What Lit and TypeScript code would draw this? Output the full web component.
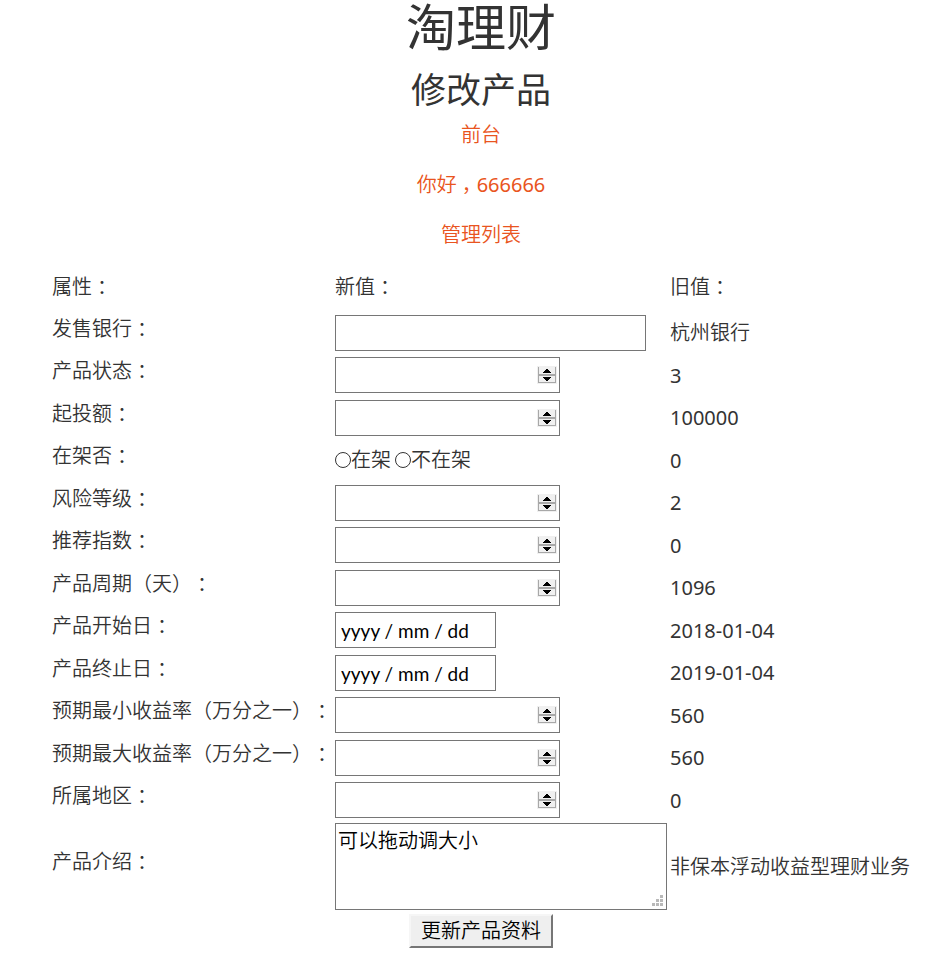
import { LitElement, html, css, nothing } from "lit";
import { customElement } from "lit/decorators.js";

type Kind = "text" | "number" | "radio" | "date" | "area";

interface Field {
  id: string;
  label: string;
  kind: Kind;
  old: string;
}

const FIELDS: Field[] = [
  { id: "bank", label: "发售银行：", kind: "text", old: "杭州银行" },
  { id: "state", label: "产品状态：", kind: "number", old: "3" },
  { id: "minimum", label: "起投额：", kind: "number", old: "100000" },
  { id: "onsale", label: "在架否：", kind: "radio", old: "0" },
  { id: "risk", label: "风险等级：", kind: "number", old: "2" },
  { id: "index", label: "推荐指数：", kind: "number", old: "0" },
  { id: "period", label: "产品周期（天）：", kind: "number", old: "1096" },
  { id: "start", label: "产品开始日：", kind: "date", old: "2018-01-04" },
  { id: "end", label: "产品终止日：", kind: "date", old: "2019-01-04" },
  { id: "minrate", label: "预期最小收益率（万分之一）：", kind: "number", old: "560" },
  { id: "maxrate", label: "预期最大收益率（万分之一）：", kind: "number", old: "560" },
  { id: "region", label: "所属地区：", kind: "number", old: "0" },
  { id: "intro", label: "产品介绍：", kind: "area", old: "非保本浮动收益型理财业务" },
];

/* Full-width colons and commas are set centred in their cell. */
const centred = (text: string) =>
  text
    .split(/([：，])/)
    .map((part) => (part === "：" || part === "，" ? html`<span class="mark">${part}</span>` : part || nothing));

@customElement("app-root")
export class AppRoot extends LitElement {
  static styles = css`
    :host {
      display: block;
      box-sizing: border-box;
      padding: 0 23px 8px 50px;
      background: #fff;
      color: #333;
      font: 350 20px/28px "Noto Sans", "Noto Sans CJK SC", sans-serif;
      text-spacing-trim: space-all;
    }
    .mark {
      display: inline-block;
      box-sizing: border-box;
      width: 20px;
      text-indent: 5px;
    }
    .title,
    .subtitle {
      margin: 0;
      font-weight: 400;
      text-align: center;
    }
    .title {
      font-size: 50px;
      line-height: 54px;
    }
    .subtitle {
      margin-top: 16px;
      font-size: 35px;
      line-height: 40px;
    }
    .links {
      display: flex;
      flex-direction: column;
      align-items: center;
      line-height: 50px;
    }
    .links a {
      color: #e95420;
      text-decoration: none;
    }
    .digits {
      font-weight: 400;
    }
    .sheet {
      width: 100%;
      border-spacing: 2px;
      border-collapse: separate;
    }
    .c-name {
      width: 281px;
    }
    .c-new {
      width: 333px;
    }
    th,
    td {
      padding: 0;
      font-weight: inherit;
      text-align: left;
      vertical-align: middle;
      white-space: nowrap;
    }
    td.old {
      font-weight: 400;
    }
    td.old.cjk {
      font-weight: 350;
    }
    .head th {
      height: 49px;
    }
    .row {
      height: 40px;
    }
    .row:nth-child(even) {
      height: 41px;
    }
    .row th {
      padding-bottom: 9px;
      line-height: 24px;
    }
    td.new {
      vertical-align: top;
      padding-top: 2px;
    }
    td.new.area-cell {
      padding-top: 0;
    }
    .field {
      display: block;
      box-sizing: border-box;
      height: 36px;
      margin: 0;
      padding: 2px;
      border: 1px solid #767676;
      border-radius: 0;
      background: #fff;
      color: #000;
      font: inherit;
    }
    .text {
      width: 311px;
    }
    .number {
      width: 225px;
    }
    .number::-webkit-inner-spin-button {
      -webkit-appearance: none;
      width: 20px;
      height: 30px;
      opacity: 1;
      background: url("data:image/svg+xml,%3Csvg xmlns='http://www.w3.org/2000/svg' width='20' height='18' shape-rendering='crispEdges'%3E%3Cpath fill='%23f0f0f0' d='M0 0h20v18H0z'/%3E%3Cpath fill='%23a8a8a8' d='M1 1h1v16H1zM18 1h1v16h-1zM1 8h18v2H1zM1 16h18v1H1z'/%3E%3Cpath d='M9 3h2v1H9zM8 4h4v1H8zM7 5h6v1H7zM6 6h8v1H6zM6 11h8v1H6zM7 12h6v1H7zM8 13h4v1H8zM9 14h2v1H9z'/%3E%3C/svg%3E")
        center no-repeat;
    }
    .date {
      width: 161px;
      padding-left: 5px;
      font-family: Lato, "Noto Sans", sans-serif;
      font-size: 19px;
      font-weight: 400;
    }
    .date::placeholder {
      color: #000;
      opacity: 1;
    }
    .area {
      width: 332px;
      height: 87px;
      resize: both;
      line-height: 30px;
    }
    .area::-webkit-resizer {
      background: url("data:image/svg+xml,%3Csvg xmlns='http://www.w3.org/2000/svg' width='15' height='15' shape-rendering='crispEdges'%3E%3Cpath fill='%23b9b9b9' d='M9 1h3v3H9zM5 5h3v3H5zM9 5h3v3H9zM1 9h3v3H1zM5 9h3v3H5zM9 9h3v3H9z'/%3E%3C/svg%3E")
        no-repeat;
    }
    .choices {
      display: flex;
      gap: 4px;
      height: 36px;
      margin: 0;
      padding: 0;
      border: 0;
    }
    .choice {
      display: flex;
      align-items: center;
    }
    .radio {
      appearance: none;
      box-sizing: border-box;
      width: 16px;
      height: 16px;
      margin: 0;
      border: 1px solid #333;
      border-radius: 50%;
      background: #fff;
    }
    .radio:checked {
      box-shadow: inset 0 0 0 3px #fff;
      background: #333;
    }
    .actions {
      display: flex;
      justify-content: center;
      padding-top: 2px;
    }
    .submit {
      box-sizing: border-box;
      height: 34px;
      padding: 0 10px;
      border: 2px solid;
      border-color: #f6f6f6 #767676 #767676 #f6f6f6;
      border-radius: 0;
      background: #efefef;
      color: #000;
      font: inherit;
      line-height: 30px;
    }
  `;

  private control(f: Field) {
    switch (f.kind) {
      case "text":
        return html`<input class="field text" id=${f.id} type="text" />`;
      case "number":
        return html`<input class="field number" id=${f.id} type="number" />`;
      case "date":
        return html`<input class="field date" id=${f.id} type="text" placeholder="yyyy / mm / dd" />`;
      case "area":
        return html`<textarea class="field area" id=${f.id} .value=${"可以拖动调大小"}></textarea>`;
      case "radio":
        return html`<fieldset class="choices" aria-labelledby="${f.id}-name">
          <label class="choice"><input class="radio" type="radio" name=${f.id} value="1" />在架</label>
          <label class="choice"><input class="radio" type="radio" name=${f.id} value="0" />不在架</label>
        </fieldset>`;
    }
  }

  private name(f: Field) {
    return f.kind === "radio"
      ? html`<span id="${f.id}-name">${centred(f.label)}</span>`
      : html`<label for=${f.id}>${centred(f.label)}</label>`;
  }

  render() {
    return html`
      <h1 class="title">淘理财</h1>
      <h2 class="subtitle">修改产品</h2>
      <nav class="links">
        <a href="#front">前台</a>
        <a href="#user">${centred("你好，")}<span class="digits">666666</span></a>
        <a href="#manage">管理列表</a>
      </nav>
      <form @submit=${(e: Event) => e.preventDefault()}>
        <table class="sheet">
          <colgroup>
            <col class="c-name" />
            <col class="c-new" />
            <col />
          </colgroup>
          <thead>
            <tr class="head">
              <th scope="col">${centred("属性：")}</th>
              <th scope="col">${centred("新值：")}</th>
              <th scope="col">${centred("旧值：")}</th>
            </tr>
          </thead>
          <tbody>
            ${FIELDS.map(
              (f) => html`<tr class="row">
                <th scope="row">${this.name(f)}</th>
                <td class="new ${f.kind}-cell">${this.control(f)}</td>
                <td class="old ${/^[\d-]+$/.test(f.old) ? "" : "cjk"}">${f.old}</td>
              </tr>`
            )}
          </tbody>
        </table>
        <div class="actions"><button class="submit" type="submit">更新产品资料</button></div>
      </form>
    `;
  }
}
